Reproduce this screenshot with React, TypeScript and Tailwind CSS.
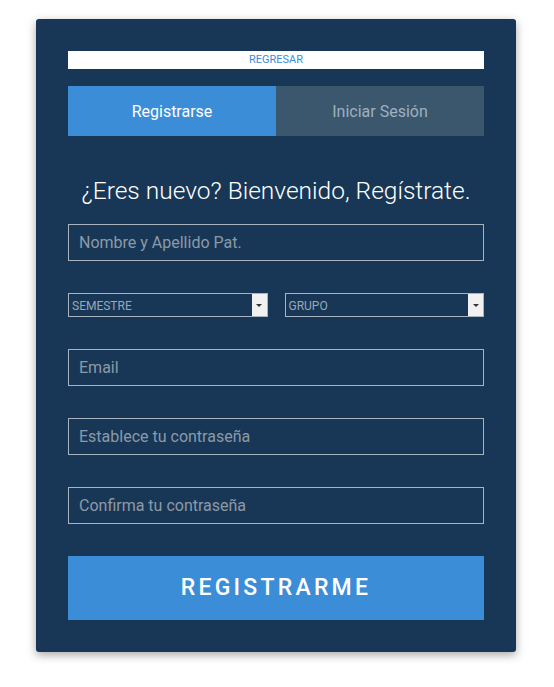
const font = { fontFamily: '"Roboto", "Liberation Sans", sans-serif' };

function TextField({ placeholder }: { placeholder: string }) {
  return (
    <div className="h-[37px] border border-[#a9b4be] flex items-center px-[10px]">
      <span className="text-[16px] text-[#8c9aa8]">{placeholder}</span>
    </div>
  );
}

function SelectField({ label }: { label: string }) {
  return (
    <div className="flex-1 h-[24px] border border-[#a9b4be] flex items-stretch">
      <span className="flex-1 flex items-center pl-[3px] pt-[1px] text-[12px] text-[#9aa8b5]">{label}</span>
      <span className="w-[15px] bg-[#f1f1f1] flex items-center justify-center">
        <span className="w-0 h-0 border-l-[3px] border-r-[3px] border-t-[3px] border-l-transparent border-r-transparent border-t-[#333]" />
      </span>
    </div>
  );
}

export default function App() {
  return (
    <div className="min-h-[687px] bg-white pt-[19px]" style={font}>
      <div className="w-[480px] ml-[36px] bg-[#183756] rounded-[3px] shadow-[0_3px_10px_rgba(0,0,0,0.35)] px-[32px] pt-[32px] pb-[32px]">
        <div className="h-[18px] bg-white flex items-center justify-center text-[11px] text-[#3b8dd8]">
          REGRESAR
        </div>
        <div className="mt-[17px] flex h-[50px]">
          <div className="flex-1 bg-[#3b8dd8] flex items-center justify-center pt-[2px] text-[16px] text-white">
            Registrarse
          </div>
          <div className="flex-1 bg-[#3a576e] flex items-center justify-center pt-[2px] text-[16px] text-[#9fb0bf]">
            Iniciar Sesión
          </div>
        </div>
        <h1 className="mt-[40px] text-center text-[24.5px] font-light text-white leading-[30px]">
          ¿Eres nuevo? Bienvenido, Regístrate.
        </h1>
        <div className="mt-[18px]">
          <TextField placeholder="Nombre y Apellido Pat." />
        </div>
        <div className="mt-[32px] flex gap-[17px]">
          <SelectField label="SEMESTRE" />
          <SelectField label="GRUPO" />
        </div>
        <div className="mt-[32px]">
          <TextField placeholder="Email" />
        </div>
        <div className="mt-[32px]">
          <TextField placeholder="Establece tu contraseña" />
        </div>
        <div className="mt-[32px]">
          <TextField placeholder="Confirma tu contraseña" />
        </div>
        <button className="mt-[32px] w-full h-[64px] bg-[#3b8dd8] text-white text-[23px] font-medium tracking-[0.14em]">
          REGISTRARME
        </button>
      </div>
    </div>
  );
}
